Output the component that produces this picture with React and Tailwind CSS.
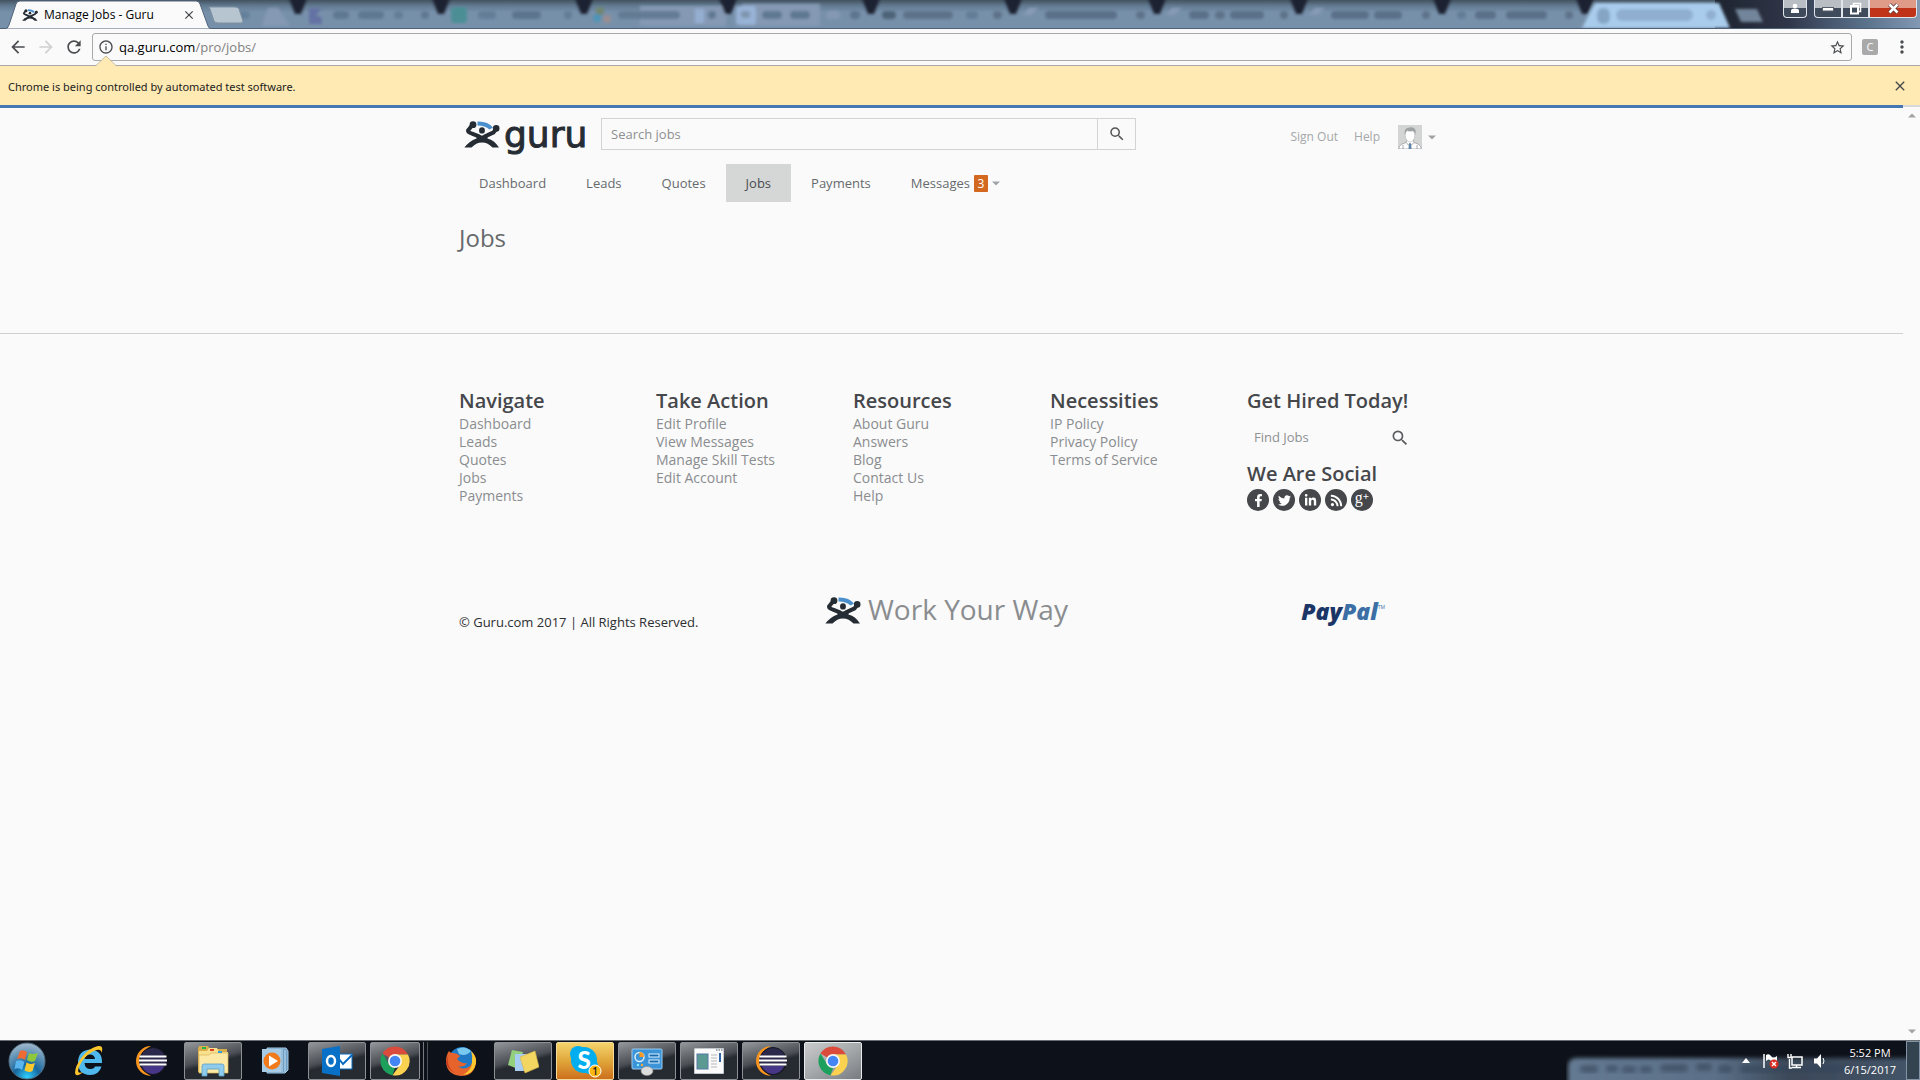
import React from "react";
import {
  MdArrowBack, MdArrowForward, MdRefresh, MdStarBorder, MdMoreVert, MdClose, MdSearch, MdInfoOutline,
} from "react-icons/md";
import { FaFacebookF, FaTwitter, FaLinkedinIn, FaRss } from "react-icons/fa";

const SANS = "font-['Open_Sans','Noto_Sans',sans-serif]";

function GuruMark({ className }) {
  return (
    <svg viewBox="0 0 36 27" className={className} aria-hidden="true">
      <path d="M13.500.4Q24 0 29 6.5L25.5 8.4Q21 4.6 13.500 4.6Z" fill="#4a90cd" />
      <g fill="none" stroke="#252c33" strokeLinecap="round" strokeLinejoin="round">
        <path d="M8.400 4L4 9.6Q4 11.600 8 12.6L15 15.4" strokeWidth="4" />
        <path d="M32 8L29.6 11.4L21 15.4" strokeWidth="4" />
      </g>
      <g fill="#252c33">
        <circle cx="9" cy="3.7" r="3.4" />
        <circle cx="32.200" cy="7.400" r="3.300" />
        <ellipse cx="18" cy="9.400" rx="2.900" ry="3.200" />
        <path d="M12 14Q18 15.4 24 13.6L23.4 17.4Q31 19.5 35 26.6H28.5Q24 21.4 18 21.4T7.500 26.600H.4Q5 20 12.600 17.400Z" />
      </g>
    </svg>
  );
}

function Caret({ className }) {
  return (
    <svg viewBox="0 0 8 5" className={className} aria-hidden="true">
      <path d="M0 .5H8L4 4.500Z" fill="#a0a3a5" />
    </svg>
  );
}

const seams = [298, 441, 584, 728, 871, 1013, 1157, 1299, 1442, 1585];
const smudges = [
  [238, 12, "#64809b"], [333, 16, "#5f7892"], [358, 26, "#5f7892"], [394, 9, "#647d97"], [421, 8, "#5f7892"],
  [478, 18, "#647d97"], [512, 29, "#5c748e"], [564, 8, "#647d97"], [618, 62, "#647b94"], [708, 8, "#5f7892"],
  [762, 20, "#5f7892"], [790, 20, "#5f7892"], [826, 14, "#8498b4"], [850, 10, "#5d758e"], [882, 14, "#4d6377"],
  [903, 50, "#5d7289"], [966, 12, "#647d97"], [993, 9, "#5d7289"], [1045, 72, "#5a6f88"], [1136, 9, "#5d7289"],
  [1189, 20, "#5a6f88"], [1215, 10, "#5d7289"], [1230, 34, "#5a6f88"], [1280, 8, "#5d7289"], [1331, 38, "#5a6f88"],
  [1374, 28, "#5a6f88"], [1422, 8, "#5d7289"], [1457, 9, "#647d97"], [1475, 21, "#5a6f88"], [1506, 41, "#5a6f88"],
  [1565, 8, "#5d7289"],
];

function GlassStrip() {
  return (
    <svg viewBox="0 0 1920 29" preserveAspectRatio="xMinYMin slice" className="absolute inset-0 h-full w-full" aria-hidden="true">
      <defs>
        <linearGradient id="strip" x2="0" y2="1">
          <stop offset="0" stopColor="#43525f" />
          <stop offset=".2" stopColor="#627a91" />
          <stop offset=".42" stopColor="#7790aa" />
          <stop offset="1" stopColor="#7790aa" />
        </linearGradient>
        <linearGradient id="desk">
          <stop offset="0" stopColor="#1d242f" />
          <stop offset=".35" stopColor="#2f3548" />
          <stop offset=".7" stopColor="#566d86" />
          <stop offset="1" stopColor="#8298b3" />
        </linearGradient>
        <filter id="soft" x="-20%" y="-50%" width="140%" height="200%"><feGaussianBlur stdDeviation="1.5" /></filter>
      </defs>
      <rect width="1920" height="29" fill="url(#strip)" />
      <rect x="1715" width="205" height="29" fill="url(#desk)" />
      <g filter="url(#soft)">
        <path d="M262 26L268 8H278L290 26ZM640 26V6H726V26ZM742 26V4H820V26Z" fill="#8599b4" />
        <rect x="695" y="9" width="9" height="14" fill="#94aed1" />
        <rect x="736" y="6" width="20" height="19" rx="3" fill="#97b2d5" />
        <rect x="741" y="11" width="9" height="7" rx="3" fill="#7f95af" />
        <path d="M309 8H322L316 15L322 18V24H309Z" fill="#6472a3" />
        <rect x="451" y="7" width="16" height="16" rx="3" fill="#4b8f95" />
        <circle cx="600" cy="11" r="4" fill="#71866e" /><circle cx="597" cy="18" r="4" fill="#4e94b7" /><circle cx="607" cy="19" r="4" fill="#9a8d90" />
        {smudges.map(([x, w, c]) => <rect key={x} x={x} y="11" width={w} height="8" rx="4" fill={c} />)}
        {[1023, 1166, 1309].map((x) => <path key={x} d={`M${x} 15L${x + 6} 8H${x + 16}L${x + 8} 15Z`} fill="#879bb6" />)}
        {seams.map((x) => <path key={x} d={`M${x - 10} -4H${x + 10}L${x + 3} 14H${x - 3}Z`} fill="#1d2430" />)}
        <path d="M1582 28L1595 3H1719L1730 28Z" fill="#a9ccec" />
        <rect x="1597" y="8" width="13" height="16" rx="6" fill="#86a5c5" />
        <rect x="1616" y="9" width="77" height="12" rx="6" fill="#90afd0" />
        <rect x="1706" y="10" width="10" height="10" rx="5" fill="#90afd0" />
        <path d="M1735 9H1757L1763 22H1741Z" fill="#72859a" />
      </g>
      <rect y="28" width="1920" height="1" fill="#4d6078" />
      <path d="M209 7Q210 7 211 7H235Q238 7 239 9L243 21Q243 23 241 23H218Q215 23 214 21L210 9Z" fill="#b7c5d0" stroke="#7d909f" />
      <path d="M4 29Q8 29 9 25L16 4Q17 1 20 1H196Q199 1 200 4L208 26Q209 29 212 29Z" fill="#fafafa" stroke="#52657c" />
    </svg>
  );
}

function TitleBar() {
  const btn = "flex h-[18px] items-center justify-center border-x border-b border-[#dfe5ea] bg-linear-to-b from-[#b9bec4] from-50% to-[#3f4b5a] to-50%";
  return (
    <header className="relative flex h-[29px] shrink-0 items-start overflow-hidden bg-[#7790aa]">
      <GlassStrip />
      <div className="relative flex h-[29px] w-[204px] items-center pr-2 pl-[22px]">
        <GuruMark className="h-3.5 w-4" />
        <span className="ml-1.5 text-xs whitespace-nowrap text-black">Manage Jobs - Guru</span>
        <button aria-label="Close tab" className="ml-auto text-[#3c4043]"><MdClose size={14} /></button>
      </div>
      <div className="relative mr-[3px] ml-auto flex">
        <button aria-label="User" className={`${btn} mr-[7px] w-6 rounded-b`}>
          <svg width="10" height="11" viewBox="0 0 10 11"><circle cx="5" cy="3" r="2.300" fill="#fff" /><path d="M1 10V7.500Q1 5.500 5 5.500T9 7.500V10Z" fill="#fff" /></svg>
        </button>
        <button aria-label="Minimize" className={`${btn} w-[28px] rounded-bl`}>
          <svg width="12" height="6" viewBox="0 0 12 6"><rect x=".5" y="1.500" width="11" height="3.500" fill="#fff" stroke="#555f6b" /></svg>
        </button>
        <button aria-label="Restore" className={`${btn} w-[27px]`}>
          <svg width="13" height="13" viewBox="0 0 13 13" fill="none"><path d="M4.500 3V1.500H11.500V9.500H10" stroke="#fff" strokeWidth="1.500" /><rect x="2" y="4" width="7" height="7.500" stroke="#fff" strokeWidth="2" /></svg>
        </button>
        <button aria-label="Close window" className="flex h-[18px] w-12 items-center justify-center rounded-br border-x border-b border-[#dfe5ea] bg-linear-to-b from-[#e09a88] from-45% to-[#c03318] to-50%">
          <svg width="13" height="11" viewBox="0 0 13 11"><path d="M2.500 1.500L10.500 9.500M10.500 1.500L2.500 9.500" stroke="#5b3a3a" strokeWidth="4" /><path d="M2.500 1.500L10.500 9.500M10.500 1.500L2.500 9.500" stroke="#fff" strokeWidth="2.500" /></svg>
        </button>
      </div>
    </header>
  );
}

function Toolbar() {
  return (
    <div className="flex h-9 shrink-0 items-center bg-[#fafafa] pr-2 pl-2 text-[#4a4c50]">
      <button aria-label="Back" className="mr-2"><MdArrowBack size={20} /></button>
      <button aria-label="Forward" className="mr-2 text-[#cfd0d1]"><MdArrowForward size={20} /></button>
      <button aria-label="Reload" className="mr-2"><MdRefresh size={20} /></button>
      <div className="flex h-7 flex-1 items-center rounded-[3px] border border-[#a9a9a9] bg-[#fafafa] px-[5px]">
        <MdInfoOutline size={16} />
        <label htmlFor="url" className="ml-[5px] pt-px text-[13px] text-black">qa.guru.com</label>
        <input id="url" defaultValue="/pro/jobs/" className="min-w-0 flex-1 pt-px text-[13px] text-[#808080] outline-none" />
        <button aria-label="Bookmark"><MdStarBorder size={17} /></button>
      </div>
      <button aria-label="Extension" className="ml-2.5 flex size-4 items-center justify-center rounded-[2px] bg-[#a9a9a9] text-[11px] text-white">C</button>
      <button aria-label="Menu" className="ml-3.5"><MdMoreVert size={20} /></button>
    </div>
  );
}

function InfoBar() {
  return (
    <div className="relative flex h-10 shrink-0 items-center justify-between border-t border-[#a9a9a9] bg-[#feeab2] pr-3 pl-2 text-[11px] text-[#222]">
      <svg width="20" height="10" viewBox="0 0 20 10" className="absolute -top-[10px] left-24" aria-hidden="true">
        <path d="M0 10L10 0L20 10Z" fill="#feeab2" /><path d="M0 9.500L10 0L20 9.500" fill="none" stroke="#c9bea0" />
      </svg>
      <span className="pt-1 font-['Noto_Sans',sans-serif]">Chrome is being controlled by automated test software.</span>
      <button aria-label="Dismiss" className="text-[#45474b]"><MdClose size={16} /></button>
    </div>
  );
}

function Avatar() {
  return (
    <svg viewBox="0 0 24 24" className="size-6" role="img" aria-label="Profile">
      <rect width="24" height="24" fill="#d3d5d5" />
      <path d="M1 24V22Q2 19 8 17.500L9 15H15L16 17.500Q22 19 23 22V24Z" fill="#fff" stroke="#8d9193" strokeWidth=".7" />
      <ellipse cx="12" cy="10.500" rx="4.800" ry="6.500" fill="#fff" stroke="#a6a9aa" strokeWidth=".5" />
      <path d="M6.800 10Q5.500 3 11 2.500Q16.500 1 17.800 6L17.300 10Q17 7 15.500 6Q11 7 9 5.500Q7.500 6.500 6.800 10Z" fill="#a0a3a4" />
      <path d="M8 17.500L11 20.500L12 18L13 20.500L16 17.500M5 20V24M19 20V24" fill="none" stroke="#8d9193" strokeWidth=".8" />
      <path d="M11 18.500H13L13.500 24H10.500Z" fill="#5d84a8" />
    </svg>
  );
}

const navItems = ["Dashboard", "Leads", "Quotes", "Jobs", "Payments"];

function SiteHeader() {
  return (
    <div className="mx-auto w-[985px] max-w-full pt-2.5">
      <div className="flex h-8 items-center pr-2 pl-[5px]">
        <a href="#home" aria-label="Guru home" className="flex w-[137px] shrink-0 items-center">
          <GuruMark className="h-[27px] w-9" />
          <span className="ml-1 pt-0.5 font-['DejaVu_Sans',sans-serif] text-[36px] leading-10 text-[#252c33] [-webkit-text-stroke:1px_#252c33]">guru</span>
        </a>
        <form className="flex h-8 w-[535px]" onSubmit={(e) => e.preventDefault()}>
          <input aria-label="Search jobs" placeholder="Search jobs" className="h-8 min-w-0 flex-1 border border-[#d3d3d3] px-[9px] text-[13px] text-[#777] outline-none placeholder:text-[#8e9092]" />
          <button aria-label="Search" className="flex w-[38px] items-center justify-center border-y border-r border-[#d3d3d3] text-[#555]"><MdSearch size={18} /></button>
        </form>
        <div className="ml-auto flex items-center pt-1.5 text-xs text-[#a5a7a9]">
          <a href="#signout">Sign Out</a>
          <a href="#help" className="ml-4">Help</a>
          <button aria-label="Account menu" className="ml-[18px] flex items-center gap-1.5"><Avatar /><Caret className="h-[5px] w-2" /></button>
        </div>
      </div>
      <nav className="mt-3.5 flex h-[38px] text-[13px] text-[#666a6d]">
        {navItems.map((n) => (
          <a key={n} href={"#" + n.toLowerCase()} className={n === "Jobs" ? "flex items-center bg-[#d5d7d6] px-5 pt-px text-[#4a4c50]" : "flex items-center px-5 pt-px"}>{n}</a>
        ))}
        <a href="#messages" className="flex items-center gap-1 px-5 pt-px">
          Messages
          <span className="flex h-[17px] w-3.5 items-center justify-center rounded-[1px] bg-[#d2691e] text-xs text-white">3</span>
          <Caret className="h-[5px] w-2" />
        </a>
      </nav>
      <h1 className="mt-5 h-[111px] text-2xl text-[#66696c]">Jobs</h1>
    </div>
  );
}

const GooglePlus = () => (
  <span className="flex pb-1 font-['Liberation_Serif',serif] text-base leading-4">
    g<span className="text-[11px] leading-3 font-bold">+</span>
  </span>
);

const columns = [
  ["Navigate", ["Dashboard", "Leads", "Quotes", "Jobs", "Payments"]],
  ["Take Action", ["Edit Profile", "View Messages", "Manage Skill Tests", "Edit Account"]],
  ["Resources", ["About Guru", "Answers", "Blog", "Contact Us", "Help"]],
  ["Necessities", ["IP Policy", "Privacy Policy", "Terms of Service"]],
];
const social = [["Facebook", FaFacebookF], ["Twitter", FaTwitter], ["LinkedIn", FaLinkedinIn], ["RSS", FaRss], ["Google Plus", GooglePlus]];

function SiteFooter() {
  const heading = "text-xl leading-7 font-semibold text-[#45474b] whitespace-nowrap";
  return (
    <footer className="border-t border-[#cfcfcf]">
      <div className="mx-auto w-[985px] max-w-full pt-[53px]">
        <div className="grid grid-cols-5">
          {columns.map(([title, links]) => (
            <section key={title}>
              <h2 className={heading}>{title}</h2>
              <ul className="text-sm leading-[18px] text-[#8a8d90]">
                {links.map((l) => <li key={l}><a href={"#" + l.replaceAll(" ", "-").toLowerCase()}>{l}</a></li>)}
              </ul>
            </section>
          ))}
          <section>
            <h2 className={heading}>Get Hired Today!</h2>
            <form className="flex h-[45px] items-center pt-px pr-[34px] pl-[7px]" onSubmit={(e) => e.preventDefault()}>
              <input aria-label="Find Jobs" placeholder="Find Jobs" className="min-w-0 flex-1 text-[13px] outline-none placeholder:text-[#8e9092]" />
              <button aria-label="Find" className="text-[#5a5c5f]"><MdSearch size={20} /></button>
            </form>
            <h2 className={heading}>We Are Social</h2>
            <div className="mt-px flex gap-1">
              {social.map(([name, Icon]) => (
                <a key={name} href={"#" + name} aria-label={name} className="flex size-[22px] items-center justify-center rounded-full bg-[#45474b] text-white"><Icon size={13} /></a>
              ))}
            </div>
          </section>
        </div>
        <div className="mt-[77px] flex h-11 items-center">
          <p className="w-[366px] pt-[26px] text-[13px] text-[#2c2e31]">© Guru.com 2017 | All Rights Reserved.</p>
          <GuruMark className="h-[27px] w-9" />
          <span className="ml-[7px] pb-0.5 text-[28px] leading-10 text-[#8a8d90]">Work Your Way</span>
          <a href="#paypal" aria-label="PayPal" className="mr-[59px] ml-auto flex pt-0.5 text-[#3b6fa5]">
            <span className="text-[23px] leading-8 font-extrabold italic"><span className="text-[#1b3567]">Pay</span>Pal</span>
            <span className="pt-2 text-[5px] leading-2">TM</span>
          </a>
        </div>
      </div>
    </footer>
  );
}

const Chrome = () => (
  <svg viewBox="0 0 30 30" className="size-[30px]">
    <path d="M15 15L2.500 7.500A14.500 14.500 0 0 1 28 8.500H15Z" fill="#db4b3c" />
    <path d="M2.500 7.500L9.500 19L15 22L12.500 29.300A14.500 14.500 0 0 1 2.500 7.500Z" fill="#1da05c" />
    <path d="M15 8.500H28A14.500 14.500 0 0 1 12.500 29.300L20 19Z" fill="#fbd150" />
    <circle cx="15" cy="15" r="7" fill="#f4f4f4" /><circle cx="15" cy="15" r="5.300" fill="#4385f4" />
  </svg>
);
const Eclipse = () => (
  <svg viewBox="0 0 32 32" className="size-8">
    <path d="M16 1A15 15 0 0 0 16 31Q6 26 6 16T16 1Z" fill="#f7941e" />
    <circle cx="18" cy="16" r="13.500" fill="#2b2a4c" stroke="#15141f" />
    <path d="M7 21H29Q26 28 18 29Q10 28 7 21Z" fill="#473788" />
    <path d="M4.500 11.500H31.500M4 15.500H32M4.500 19.500H31.500" stroke="#fff" strokeWidth="2" />
  </svg>
);
const Explorer = () => (
  <svg viewBox="0 0 32 32" className="size-8">
    <path d="M1 4L2 1H11L13 4H30V27H1Z" fill="#d9ae4a" /><path d="M2 6H10L12 3H20L22 7H31V28H2Z" fill="#f8e08c" />
    <path d="M2 10H12L14 8H31V28H2Z" fill="#fbe9a5" stroke="#d8b45c" strokeWidth=".7" />
    <rect x="5" y="2" width="4" height="2" fill="#26b44a" /><rect x="13" y="4" width="4" height="2" fill="#e0452b" /><rect x="21" y="6" width="4" height="2" fill="#2ea0dd" />
    <path d="M5 31V21Q5 19 7 19H25Q27 19 27 21V31H22V24H10V31Z" fill="#8fcbea" stroke="#5aa0c8" strokeWidth=".8" />
  </svg>
);
const Orb = () => (
  <svg viewBox="0 0 38 38" className="size-[38px]">
    <defs><radialGradient id="orb" cx=".5" cy=".95" r=".9"><stop offset="0" stopColor="#2fd0ff" /><stop offset=".4" stopColor="#17679f" /><stop offset="1" stopColor="#98b4c8" /></radialGradient></defs>
    <circle cx="19" cy="19" r="18" fill="url(#orb)" stroke="#526d80" />
    <path d="M12 9Q15 7 19 10L17 18Q14 15 9 17Z" fill="#ee6b34" /><path d="M21 11Q24 13 30 11L27 19Q23 21 19 18Z" fill="#8fc83c" />
    <path d="M8 19Q13 17 16.500 20L14 28Q11 25 6.500 27Z" fill="#5bb5ef" /><path d="M18.500 20.500Q22 23 27 21L24.500 29Q21 31 16.500 28.500Z" fill="#fcc92c" />
  </svg>
);
const Ie = () => (
  <svg viewBox="0 0 32 32" className="size-8">
    <path d="M29 18H11.500Q12 24 17.500 24Q21 24 22 21.500H28.500Q26 30 17 30Q5 29.500 5 17.500T17 4.500Q29.500 5 29 18ZM11.500 14H22Q21.500 9.500 17 9.500T11.500 14Z" fill="#4fb9ee" />
    <path d="M10 27Q3 33 2 28Q2 21 9 12T25 1Q31 0 28.500 8Q28 2 19 7T6 22Q3 30 10 27Z" fill="#fbc52c" />
  </svg>
);
const Media = () => (
  <svg viewBox="0 0 28 28" className="size-7">
    <path d="M6 1H25L27 4V23L24 26H6Z" fill="#6f9fc4" stroke="#a6cbe4" /><path d="M21 2V25M24 3V25" stroke="#c3def0" />
    <rect x="1" y="2" width="19" height="23" fill="#a8cbe5" /><circle cx="11" cy="14" r="8.500" fill="#f07a1c" /><path d="M8 8.500L17 14L8 19.500Z" fill="#fff" />
  </svg>
);
const Outlook = () => (
  <svg viewBox="0 0 32 32" className="size-8">
    <rect x="16" y="9" width="15" height="15" fill="#fff" stroke="#0a6cc0" /><path d="M18 14L22 19L31 10" fill="none" stroke="#0a6cc0" strokeWidth="2" />
    <path d="M1 4L19 1V31L1 28Z" fill="#0870c6" /><ellipse cx="10" cy="16" rx="4" ry="5" fill="none" stroke="#fff" strokeWidth="2.500" />
  </svg>
);
const Firefox = () => (
  <svg viewBox="0 0 32 32" className="size-8">
    <circle cx="17" cy="15" r="13" fill="#2079c5" /><path d="M12 4Q20 0 26 6Q21 12 14 9Z" fill="#79c8ef" />
    <path d="M4 6Q5 8 8 8Q12 8 15 11L12 14Q16 19 22 18Q19 23 13 21Q18 26 25 21Q29 17 27 7Q32 12 31 18Q29 31 16 31Q2 30 1 17Q1 10 4 6Z" fill="#e6642b" />
    <path d="M26 6Q32 12 31 18Q29 29 18 30Q27 25 27 17Q28 11 26 6Z" fill="#fcc830" /><path d="M3 11Q1 22 10 28Q2 24 1 17Z" fill="#c83b20" />
  </svg>
);
const Notes = () => (
  <svg viewBox="0 0 32 28" className="h-7 w-8">
    <path d="M5 3L16 5L11 22L1 18Z" fill="#93cf7c" /><path d="M8 7H20V24H8Z" fill="#a8cdf2" />
    <path d="M13 10L28 4L32 20L18 26Z" fill="#f3d661" stroke="#d5b548" strokeWidth=".6" />
  </svg>
);
const Skype = () => (
  <svg viewBox="0 0 34 34" className="size-[34px]">
    <circle cx="10" cy="10" r="8" fill="#00aeef" /><circle cx="16" cy="16" r="13" fill="#00aeef" /><circle cx="22" cy="22" r="8" fill="#00aeef" />
    <text x="16" y="24.500" textAnchor="middle" fontFamily="Lato, sans-serif" fontWeight="900" fontSize="24" fill="#fff">S</text>
    <circle cx="27" cy="27" r="6" fill="#fdb813" stroke="#fff" /><text x="27" y="31" textAnchor="middle" fontFamily="Open Sans, sans-serif" fontSize="10" fontWeight="600" fill="#222">1</text>
  </svg>
);
const Panel = () => (
  <svg viewBox="0 0 32 30" className="h-[30px] w-8">
    <rect x="1" y="3" width="30" height="20" rx="1" fill="#3b93d8" stroke="#9bcdf0" />
    <circle cx="8.500" cy="11" r="4.500" fill="none" stroke="#d8edfa" strokeWidth="1.500" /><path d="M8.500 11V6Q13 6 13 11Z" fill="#f59a23" />
    <rect x="18" y="8" width="10" height="3" fill="#146bb0" stroke="#e2f2fc" /><rect x="18" y="14" width="10" height="3" fill="#146bb0" stroke="#e2f2fc" />
    <circle cx="7" cy="19" r="1.200" fill="#8ef" /><circle cx="11" cy="19" r="1.200" fill="#fa3" /><ellipse cx="16" cy="25" rx="6" ry="4.500" fill="#dcdcdc" stroke="#8b8b8b" strokeWidth=".6" />
  </svg>
);
const Doc = () => (
  <svg viewBox="0 0 30 26" className="h-[26px] w-[30px]">
    <rect width="30" height="26" fill="#fafafa" stroke="#8c96a0" /><path d="M22 2H29" stroke="#456" strokeDasharray="1.500 1" />
    <rect x="3" y="6" width="11" height="15" fill="#5a9a92" stroke="#5777a5" /><path d="M17 7H23M17 10H23M17 13H23M17 16H23M17 19H23" stroke="#b4b8bc" />
    <rect x="25" y="5" width="2" height="9" fill="#2f63a3" />
  </svg>
);

const tasks = [
  ["Internet Explorer", Ie, "idle"], ["Eclipse", Eclipse, "idle"], ["Windows Explorer", Explorer, "open"],
  ["Media Player", Media, "idle"], ["Outlook", Outlook, "open"], ["Google Chrome", Chrome, "stack"],
  ["Firefox", Firefox, "idle"], ["Sticky Notes", Notes, "open"], ["Skype", Skype, "alert"],
  ["Control Panel", Panel, "open"], ["Document", Doc, "open"], ["Eclipse workspace", Eclipse, "open"], ["Chrome window", Chrome, "active"],
];
const taskStyle = {
  idle: "border-transparent w-[58px]",
  open: "border-[#8d9196] w-[58px] bg-linear-165 from-[#94979a] via-[#4b4f55] via-45% to-[#262a31] to-55%",
  stack: "border-[#8d9196] w-[50px] bg-linear-165 from-[#94979a] via-[#4b4f55] via-45% to-[#262a31] to-55%",
  alert: "border-[#f3dc9b] w-[58px] bg-linear-to-b from-[#f4d36b] via-[#e0a63a] to-[#cc6f1c]",
  active: "border-[#e9eaeb] w-[58px] bg-linear-150 from-[#c9cbcc] via-[#a5a8aa] to-[#777b80]",
};

function Taskbar() {
  return (
    <footer className="relative flex h-10 shrink-0 items-center overflow-hidden border-t border-[#6a6f74] bg-[#0d1119]">
      <svg viewBox="0 0 354 40" className="absolute top-0 right-0 h-10 w-[354px]" aria-hidden="true">
        <defs>
          <linearGradient id="tray"><stop offset="0" stopColor="#647a92" /><stop offset=".4" stopColor="#5b7088" /><stop offset=".6" stopColor="#3b4858" /><stop offset="1" stopColor="#46576c" /></linearGradient>
          <filter id="trayBlur"><feGaussianBlur stdDeviation="2" /></filter>
        </defs>
        <rect x="2" y="17" width="370" height="40" rx="8" fill="url(#tray)" filter="url(#trayBlur)" />
        <g fill="#35445a" opacity=".6" filter="url(#trayBlur)">
          <rect x="14" y="24" width="18" height="8" rx="4" /><rect x="40" y="24" width="12" height="7" rx="3" /><rect x="56" y="25" width="14" height="7" rx="3" /><rect x="74" y="25" width="12" height="7" rx="3" /><rect x="94" y="23" width="28" height="8" rx="4" /><rect x="130" y="22" width="16" height="8" rx="4" /><rect x="152" y="24" width="14" height="8" rx="4" /><rect x="174" y="24" width="110" height="8" rx="4" />
        </g>
      </svg>
      <button aria-label="Start" className="relative ml-2 shrink-0"><Orb /></button>
      <div className="relative ml-[14px] flex gap-1">
        {tasks.map(([name, Icon, state]) => (
          <div key={name} className="flex w-[58px] shrink-0">
            <button aria-label={name} className={"flex h-[38px] shrink-0 items-center justify-center overflow-hidden rounded-[2px] border " + taskStyle[state]}><Icon /></button>
            {state === "stack" && <><span className="ml-px h-[38px] w-[3px] border-r border-[#777b80]" /><span className="h-[38px] w-1 border-r border-[#4d5156]" /></>}
          </div>
        ))}
      </div>
      <div className="relative ml-auto flex h-full shrink-0 items-center text-white">
        <svg width="8" height="5" viewBox="0 0 8 5" className="mr-[13px]"><path d="M0 5L4 0L8 5Z" fill="#fff" /></svg>
        <svg width="16" height="16" viewBox="0 0 16 16" className="mr-2"><path d="M1 1V15" stroke="#fff" strokeWidth="1.500" /><path d="M3 2Q6 0 8 3T14 3V9Q10 11 8 8T3 8Z" fill="#fff" /><circle cx="11" cy="11" r="4.500" fill="#d92c20" /><path d="M9 9L13 13M13 9L9 13" stroke="#fff" strokeWidth="1.400" /></svg>
        <svg width="16" height="16" viewBox="0 0 16 16" fill="none" stroke="#fff" className="mr-2.5"><rect x="5" y="4" width="10" height="8" strokeWidth="1.500" /><path d="M5 14.500H14M9.500 12V14M2.500 6V15H5M1 1V4.500H4V1" strokeWidth="1.400" /></svg>
        <svg width="14" height="16" viewBox="0 0 14 16" className="mr-[11px]"><path d="M1 5.500H4L8 1V15L4 10.500H1Z" fill="#fff" /><path d="M10 5Q12 8 10 11" fill="none" stroke="#fff" /></svg>
        <div className="w-16 text-center text-[11px] leading-[17px]"><div>5:52 PM</div><div>6/15/2017</div></div>
        <button aria-label="Show desktop" className="ml-1 h-full w-[14px] border border-[#8294a6] bg-[#33434f]" />
      </div>
    </footer>
  );
}

export default function App() {
  return (
    <div className={`flex min-h-screen flex-col bg-[#fafafa] ${SANS}`}>
      <TitleBar />
      <Toolbar />
      <InfoBar />
      <div className="flex flex-1">
        <main className="min-w-0 flex-1 border-t-3 border-[#4577b5]">
          <SiteHeader />
          <SiteFooter />
        </main>
        <div className="flex w-[17px] flex-col items-center justify-between border-t-2 border-[#d6d8da] py-[6px]" aria-hidden="true">
          <Caret className="h-[5px] w-2 rotate-180" />
          <Caret className="h-[5px] w-2" />
        </div>
      </div>
      <Taskbar />
    </div>
  );
}
